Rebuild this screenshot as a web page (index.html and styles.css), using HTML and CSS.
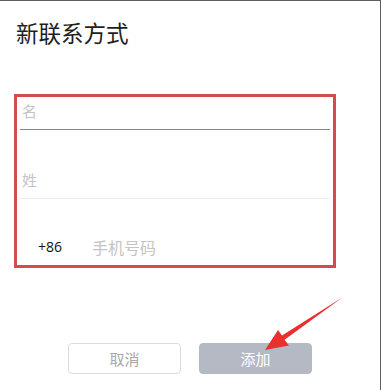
FILE: index.html
```html
<!DOCTYPE html>
<html lang="zh">

<head>
    <meta charset="UTF-8">
    <meta name="viewport" content="width=device-width, initial-scale=1.0">
    <title>新联系方式</title>
    <link rel="stylesheet" href="styles.css">
</head>

<body>
    <div class="window">
        <h1 class="title">新联系方式</h1>

        <!-- 表单区域（红框标注） -->
        <div class="form_box">
            <div class="field field_first">
                <input type="text" placeholder="名">
            </div>
            <div class="field field_tall">
                <input type="text" placeholder="姓">
            </div>
            <div class="phone_row">
                <span class="code">+86</span>
                <input type="text" class="phone" placeholder="手机号码">
            </div>
        </div>

        <div class="btns">
            <a href="javascript:;" class="btn btn_cancel">取消</a>
            <a href="javascript:;" class="btn btn_add">添加</a>
        </div>

        <!-- 红色箭头标注 -->
        <svg class="arrow" width="381" height="390" viewBox="0 0 381 390">
            <polygon points="265,350 278,330 282,335.5 343,297 284.6,339.7 289,345.5" fill="#e8312f" />
        </svg>
    </div>
</body>

</html>
```

FILE: styles.css
```css
* {
    margin: 0px;
    padding: 0px;
    box-sizing: border-box;
}

a {
    text-decoration: none;
}

body {
    background-color: #fff;
    font-family: "Noto Sans CJK SC", "Noto Sans", sans-serif;
}

.window {
    width: 381px;
    height: 390px;
    position: relative;
    border-top: 1px solid #5e5e5e;
    border-right: 1px solid #5e5e5e;
    overflow: hidden;
}

.title {
    font-size: 22.5px;
    font-weight: 400;
    line-height: 24px;
    color: #1e1e1e;
    padding: 19px 0px 0px 16px;
}


/* -------------------------表单------------------------- */
.form_box {
    width: 322px;
    height: 174px;
    margin: 50px 0px 0px 14px;
    border: 3px solid #d34c4c;
    padding: 0px 3px;
}

.field {
    border-bottom: 1px solid #ececec;
    display: flex;
    align-items: flex-end;
    padding-bottom: 8px;
}

/* 当前聚焦的输入框，下划线为绿色 */
.form_box .field_first {
    height: 33px;
    border-bottom: 1px solid #52a84c;
}

.field_tall {
    height: 69px;
}

.field input,
.phone_row input {
    border: none;
    outline: none;
    background: transparent;
    width: 100%;
    font-family: "Noto Sans CJK SC", sans-serif;
    font-size: 15px;
    line-height: 20px;
    height: 20px;
    color: #333;
    padding-left: 2px;
}

input::placeholder {
    color: #c4c4c4;
}

.phone_row {
    height: 65px;
    display: flex;
    align-items: flex-end;
    padding-bottom: 7px;
}

.phone_row .code {
    font-family: "Open Sans", "Liberation Sans", sans-serif;
    font-size: 14px;
    line-height: 20px;
    color: #111;
    padding-left: 18px;
    width: 72px;
    flex-shrink: 0;
}

.phone_row .phone {
    font-size: 16px;
    padding-left: 0px;
}


/* -------------------------按钮------------------------- */
.btns {
    display: flex;
    justify-content: center;
    gap: 18px;
    margin-top: 75px;
}

.btn {
    width: 113px;
    height: 31px;
    border-radius: 4px;
    font-size: 15px;
    line-height: 29px;
    text-align: center;
}

.btn_cancel {
    border: 1px solid #dcdcdc;
    color: #a8a8a8;
    background-color: #fff;
}

.btn_add {
    border: 1px solid #b4b9c3;
    background-color: #b4b9c3;
    color: #fff;
}

.arrow {
    position: absolute;
    left: 0px;
    top: -1px;
    pointer-events: none;
}
```
